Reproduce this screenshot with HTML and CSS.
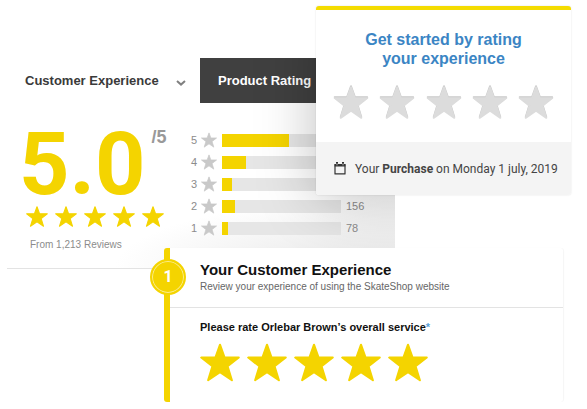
FILE: index.html
```html
<!DOCTYPE html>
<html lang="en">
<head>
<meta charset="utf-8">
<title>Customer Experience</title>
<link rel="stylesheet" href="styles.css">
</head>
<body>
<svg class="defs" aria-hidden="true">
  <symbol id="star" viewBox="0 0 40 38">
    <path d="M20 1.2 24.6 14H38.8L27.6 22.8 31.9 36.8 20 28.6 8.1 36.8 12.4 22.8 1.2 14H15.4Z" fill="currentColor" stroke="currentColor" stroke-width="2" stroke-linejoin="round"/>
  </symbol>
</svg>
<main class="collage">
  <section class="summary">
    <nav class="tabs">
      <button class="tab" type="button">Customer Experience
        <svg class="chevron" viewBox="0 0 10 6" aria-hidden="true"><path d="M1 1 5 4.6 9 1" fill="none" stroke="currentColor" stroke-width="2"/></svg>
      </button>
      <button class="tab tab-dark" type="button">Product Rating</button>
    </nav>
    <div class="scores">
      <div class="overall">
        <p class="score">5.0<span class="score-max">/5</span></p>
        <div class="overall-stars">
          <svg><use href="#star"/></svg><svg><use href="#star"/></svg><svg><use href="#star"/></svg><svg><use href="#star"/></svg><svg><use href="#star"/></svg>
        </div>
        <p class="count">From 1,213 Reviews</p>
      </div>
      <ul class="bars">
        <li><span>5</span><svg><use href="#star"/></svg><div class="track"><div class="fill" style="width:56%"></div></div><span></span></li>
        <li><span>4</span><svg><use href="#star"/></svg><div class="track"><div class="fill" style="width:20%"></div></div><span></span></li>
        <li><span>3</span><svg><use href="#star"/></svg><div class="track"><div class="fill" style="width:8%"></div></div><span></span></li>
        <li><span>2</span><svg><use href="#star"/></svg><div class="track"><div class="fill" style="width:11%"></div></div><span>156</span></li>
        <li><span>1</span><svg><use href="#star"/></svg><div class="track"><div class="fill" style="width:5%"></div></div><span>78</span></li>
      </ul>
    </div>
  </section>

  <section class="start">
    <h2 class="start-title">Get started by rating<br>your experience</h2>
    <div class="start-stars">
      <button type="button" aria-label="1 star"><svg><use href="#star"/></svg></button>
      <button type="button" aria-label="2 stars"><svg><use href="#star"/></svg></button>
      <button type="button" aria-label="3 stars"><svg><use href="#star"/></svg></button>
      <button type="button" aria-label="4 stars"><svg><use href="#star"/></svg></button>
      <button type="button" aria-label="5 stars"><svg><use href="#star"/></svg></button>
    </div>
    <p class="purchase">
      <svg class="calendar" viewBox="0 0 12 13" aria-hidden="true"><path d="M1 2.5H11V11.9H1Z" fill="none" stroke="currentColor" stroke-width="1.2" stroke-linejoin="round"/><path d="M.6 2H11.4V4.6H.6ZM2 0H4V3H2ZM8 0H10V3H8Z" fill="currentColor"/><path d="M3 1.2V3.4M9 1.2V3.4" stroke="#f4f4f4" stroke-width=".7"/></svg>
      <span>Your <b>Purchase</b> on Monday 1 july, 2019</span>
    </p>
  </section>

  <section class="survey">
    <span class="step">1</span>
    <header class="survey-head">
      <h2>Your Customer Experience</h2>
      <p>Review your experience of using the SkateShop website</p>
    </header>
    <div class="survey-body">
      <h3>Please rate Orlebar Brown’s overall service<span class="required">*</span></h3>
      <div class="survey-stars">
        <button type="button" aria-label="1 star"><svg><use href="#star"/></svg></button>
        <button type="button" aria-label="2 stars"><svg><use href="#star"/></svg></button>
        <button type="button" aria-label="3 stars"><svg><use href="#star"/></svg></button>
        <button type="button" aria-label="4 stars"><svg><use href="#star"/></svg></button>
        <button type="button" aria-label="5 stars"><svg><use href="#star"/></svg></button>
      </div>
    </div>
  </section>
</main>
</body>
</html>
```
FILE: styles.css
```css
* { box-sizing: border-box; }
body { margin: 0; background: #fff; font-family: "Liberation Sans", Arial, sans-serif; }
h2, h3, p, ul { margin: 0; padding: 0; }
button { border: 0; padding: 0; background: none; font: inherit; color: inherit; }
svg { display: block; }
.defs { position: absolute; width: 0; height: 0; }

/* The three cards share one grid and overlap on it. */
.collage {
  display: grid;
  grid-template-columns: 7px 157fr 152fr 79fr 168fr 8px 16px;
  grid-template-rows: 6px 52px auto 21px auto;
}

.summary {
  grid-column: 2 / 5;
  grid-row: 3 / 5;
  position: relative;
  overflow: hidden;
  border-bottom: 1px solid #e3e3e3;
  background: radial-gradient(ellipse 280px 70px at 100% 100%, #ececec 30%, #fff);
}
/* Shade that the start card casts on this card. */
.summary::after {
  content: "";
  position: absolute;
  top: -60px;
  left: 80%;
  right: -180px;
  bottom: 74px;
  box-shadow: 0 4px 56px rgba(0, 0, 0, .26);
  pointer-events: none;
}
.tabs { display: grid; grid-template-columns: 193fr 195fr; }
.tab {
  display: flex;
  align-items: center;
  justify-content: space-between;
  height: 45px;
  padding: 0 14px 0 18px;
  font-size: 13px;
  font-weight: bold;
  color: #3a3a3a;
  white-space: nowrap;
}
.tab-dark { background: #404040; color: #fff; }
.chevron { width: 10px; height: 6px; margin-top: 4px; color: #808080; }

.scores { display: grid; grid-template-columns: 184fr 204fr; }
.overall { padding: 17px 0 16px 12px; }
.score {
  display: flex;
  font: bold 88px/88px Roboto, sans-serif;
  color: #f4d400;
}
.score-max { margin: 8px 0 0 6px; font: bold 18px/18px "Liberation Sans", Arial, sans-serif; color: #999; }
.overall-stars { display: flex; gap: 7px; margin: -2px 0 0 7px; color: #f4d400; }
.overall-stars svg { width: 22px; height: 21px; }
.count { margin: 11px 0 0 11px; font-size: 10px; line-height: 14px; color: #8c8c8c; }

.bars { display: grid; align-content: start; padding-top: 26px; list-style: none; }
.bars li {
  display: grid;
  grid-template-columns: 5px 16px 1fr 49px;
  column-gap: 5px;
  align-items: center;
  height: 22px;
  font-size: 11px;
  color: #8c8c8c;
}
.bars li svg { width: 16px; height: 16px; color: #c9c9c9; }
.track { height: 13px; background: #e6e6e6; }
.fill { height: 100%; background: #f4d400; }

.start {
  grid-column: 4 / 7;
  grid-row: 2 / 4;
  align-self: start;
  z-index: 1;
  border-top: 4px solid #f4dc00;
  border-radius: 3px;
  background: #fff;
  box-shadow: 0 0 2px rgba(0, 0, 0, .12);
  overflow: hidden;
}
.start-title { padding-top: 20px; font-size: 16px; line-height: 19px; text-align: center; color: #3b85c4; }
.start-stars { display: flex; justify-content: space-between; padding: 18px 17px 23px; color: #dcdcdc; }
.start-stars svg { width: 36px; height: 33px; filter: drop-shadow(0 -1px 0 #c8c8c8); }
.purchase {
  display: flex;
  align-items: center;
  gap: 9px;
  height: 53px;
  padding-left: 18px;
  background: #f4f4f4;
  font: 400 12px/16px Roboto, sans-serif;
  color: #444;
  white-space: nowrap;
}
.calendar { width: 12px; height: 13px; color: #333; }

.survey {
  grid-column: 3 / 6;
  grid-row: 4 / 6;
  z-index: 1;
  position: relative;
  border-left: 6px solid #f4d400;
  border-radius: 3px;
  background: #fff;
  box-shadow: 1px 0 1px rgba(0, 0, 0, .04);
}
.step {
  position: absolute;
  top: 11px;
  left: -20px;
  width: 36px;
  height: 36px;
  border: 2px solid #f4d400;
  border-radius: 50%;
  background: #f4d400;
  box-shadow: inset 0 0 0 1px #faec8c;
  font: bold 16px/32px Roboto, sans-serif;
  text-align: center;
  color: #fff;
}
.survey-head { height: 60px; padding: 13px 0 0 30px; border-bottom: 1px solid #e3e3e3; }
.survey-head h2 { font-size: 15px; line-height: 18px; color: #111; }
.survey-head p { font-size: 10px; line-height: 16px; color: #666; }
.survey-body { padding: 12px 0 20px 30px; }
.survey-body h3 { font-size: 11px; line-height: 14px; color: #111; }
.required { color: #5aa2d8; }
.survey-stars { display: flex; gap: 7px; margin-top: 9px; color: #f4d400; }
.survey-stars svg { width: 40px; height: 39px; }
```
